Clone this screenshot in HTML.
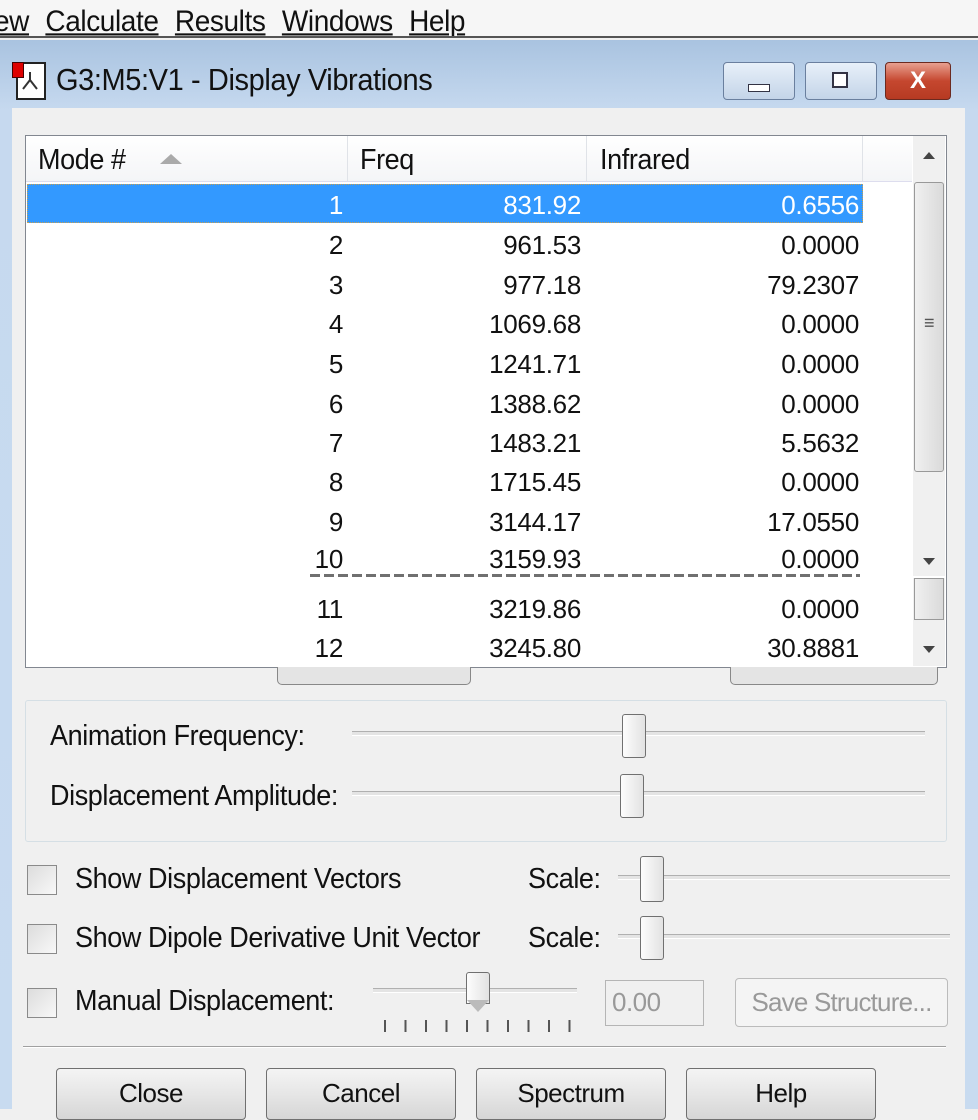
<!DOCTYPE html>
<html><head><style>
body{margin:0;width:978px;height:1109px;overflow:hidden;background:#f0f0f0;font-family:"Liberation Sans",sans-serif;position:relative}
.a{position:absolute}
.t{font-size:27px;color:#111;white-space:nowrap;letter-spacing:-0.4px;transform:scaleY(1.05);transform-origin:0 0}
.row{position:absolute;left:27px;width:836px;height:40px;font-size:26px;letter-spacing:-0.3px;color:#111}
.row span{position:absolute;top:6px;text-align:right}
.c1{right:520px}.c2{right:282px}.c3{right:4px}
.btn{position:absolute;border:1px solid #707070;border-radius:4px;background:linear-gradient(#f4f4f4,#e6e6e6 50%,#d6d6d6);text-align:center;font-size:26px;letter-spacing:-0.5px;color:#111}
.cb{position:absolute;left:27px;width:28px;height:28px;border:1px solid #8a8a8a;background:linear-gradient(135deg,#dcdcdc,#f8f8f8)}
.track{position:absolute;height:3px;border-top:1px solid #b0b0b0;border-bottom:1px solid #fff;background:#e4e4e4}
.thumb{position:absolute;width:22px;border:1px solid #707070;border-radius:3px;background:linear-gradient(90deg,#fdfdfd,#e2e2e2)}
</style></head><body>
<div class="a" style="left:0;top:0;width:978px;height:38px;background:#f6f6f6"></div>
<div class="a t" style="left:-6px;top:5px;font-size:28px;word-spacing:9px"><u>ew</u> <u>Calculate</u> <u>Results</u> <u>Windows</u> <u>Help</u></div>
<div class="a" style="left:0;top:36px;width:978px;height:2px;background:#555"></div>
<div class="a" style="left:0;top:40px;width:978px;height:1069px;background:linear-gradient(#a9c3e0,#c6d9ef 70px,#c8dbf0)"></div>
<div class="a" style="left:16px;top:62px;width:26px;height:34px;background:#fff;border:2px solid #222"></div>
<div class="a" style="left:12px;top:62px;width:10px;height:14px;background:#d00;border:1px solid #400"></div>
<svg class="a" style="left:20px;top:70px" width="20" height="22"><path d="M10 2V10M10 10L3 19M10 10L17 19" stroke="#333" stroke-width="2" fill="none"/></svg>
<div class="a t" style="left:56px;top:64px;font-size:29px">G3:M5:V1 - Display Vibrations</div>
<div class="a" style="left:723px;top:62px;width:70px;height:36px;border:1px solid #6a7f9e;border-radius:4px;background:linear-gradient(#e8f0f9,#c4d4e8)"></div>
<div class="a" style="left:748px;top:84px;width:20px;height:6px;background:#fff;border:1px solid #334"></div>
<div class="a" style="left:805px;top:62px;width:70px;height:36px;border:1px solid #6a7f9e;border-radius:4px;background:linear-gradient(#e8f0f9,#c4d4e8)"></div>
<div class="a" style="left:832px;top:72px;width:12px;height:12px;border:2px solid #334;background:#fff"></div>
<div class="a" style="left:885px;top:62px;width:64px;height:36px;border:1px solid #6b2a20;border-radius:4px;background:linear-gradient(#e8a090,#c5472f 50%,#b63a22);color:#fff;font-weight:bold;font-size:24px;text-align:center;line-height:36px">X</div>
<div class="a" style="left:12px;top:108px;width:953px;height:1001px;background:#f0f0f0"></div>
<div class="a" style="left:25px;top:135px;width:920px;height:531px;border:1px solid #828790;background:#fff"></div>
<div class="a" style="left:26px;top:136px;width:886px;height:45px;background:linear-gradient(#fff,#f4f5f7);border-bottom:1px solid #dde"></div>
<div class="a" style="left:347px;top:136px;width:1px;height:45px;background:#e0e3e8"></div>
<div class="a" style="left:586px;top:136px;width:1px;height:45px;background:#e0e3e8"></div>
<div class="a" style="left:862px;top:136px;width:1px;height:45px;background:#e0e3e8"></div>
<div class="a t" style="left:38px;top:144px">Mode #</div>
<div class="a" style="left:160px;top:154px;width:0;height:0;border-left:11px solid transparent;border-right:11px solid transparent;border-bottom:10px solid #aaa"></div>
<div class="a t" style="left:360px;top:144px">Freq</div>
<div class="a t" style="left:600px;top:144px">Infrared</div>
<div class="a" style="left:27px;top:184px;width:836px;height:39px;background:#3399ff;border:1px dotted #c8a050;box-sizing:border-box"></div>
<div class="row" style="top:184px;color:#fff"><span class="c1">1</span><span class="c2">831.92</span><span class="c3">0.6556</span></div>
<div class="row" style="top:224px"><span class="c1">2</span><span class="c2">961.53</span><span class="c3">0.0000</span></div>
<div class="row" style="top:264px"><span class="c1">3</span><span class="c2">977.18</span><span class="c3">79.2307</span></div>
<div class="row" style="top:303px"><span class="c1">4</span><span class="c2">1069.68</span><span class="c3">0.0000</span></div>
<div class="row" style="top:343px"><span class="c1">5</span><span class="c2">1241.71</span><span class="c3">0.0000</span></div>
<div class="row" style="top:383px"><span class="c1">6</span><span class="c2">1388.62</span><span class="c3">0.0000</span></div>
<div class="row" style="top:422px"><span class="c1">7</span><span class="c2">1483.21</span><span class="c3">5.5632</span></div>
<div class="row" style="top:461px"><span class="c1">8</span><span class="c2">1715.45</span><span class="c3">0.0000</span></div>
<div class="row" style="top:501px"><span class="c1">9</span><span class="c2">3144.17</span><span class="c3">17.0550</span></div>
<div class="row" style="top:538px"><span class="c1">10</span><span class="c2">3159.93</span><span class="c3">0.0000</span></div>
<div class="a" style="left:310px;top:574px;width:550px;height:3px;background:repeating-linear-gradient(90deg,#333 0 10px,transparent 10px 14px);opacity:.7"></div>
<div class="row" style="top:588px"><span class="c1">11</span><span class="c2">3219.86</span><span class="c3">0.0000</span></div>
<div class="row" style="top:627px"><span class="c1">12</span><span class="c2">3245.80</span><span class="c3">30.8881</span></div>
<div class="a" style="left:913px;top:136px;width:32px;height:440px;background:#f0f0f0"></div>
<div class="a" style="left:914px;top:182px;width:30px;height:290px;border:1px solid #999;border-radius:3px;background:linear-gradient(90deg,#f0f0f0,#dadada);box-sizing:border-box"></div>
<div class="a" style="left:923px;top:152px;border-left:6px solid transparent;border-right:6px solid transparent;border-bottom:7px solid #444"></div>
<div class="a" style="left:923px;top:558px;border-left:6px solid transparent;border-right:6px solid transparent;border-top:7px solid #444"></div>
<div class="a t" style="left:924px;top:312px;font-size:18px;color:#555">≡</div>
<div class="a" style="left:913px;top:578px;width:32px;height:88px;background:#f0f0f0"></div>
<div class="a" style="left:914px;top:578px;width:30px;height:42px;border:1px solid #999;background:linear-gradient(90deg,#f0f0f0,#dadada);box-sizing:border-box"></div>
<div class="a" style="left:923px;top:646px;border-left:6px solid transparent;border-right:6px solid transparent;border-top:7px solid #444"></div>
<div class="a" style="left:277px;top:667px;width:192px;height:17px;border:1px solid #888;border-top:none;border-radius:0 0 5px 5px;background:#e4e4e4"></div>
<div class="a" style="left:730px;top:667px;width:206px;height:17px;border:1px solid #888;border-top:none;border-radius:0 0 5px 5px;background:#e4e4e4"></div>
<div class="a" style="left:25px;top:700px;width:920px;height:140px;border:1px solid #d5dfe5;border-radius:3px"></div>
<div class="a t" style="left:50px;top:720px">Animation Frequency:</div>
<div class="track" style="left:352px;top:731px;width:573px"></div>
<div class="thumb" style="left:622px;top:714px;height:42px"></div>
<div class="a t" style="left:50px;top:780px">Displacement Amplitude:</div>
<div class="track" style="left:352px;top:791px;width:573px"></div>
<div class="thumb" style="left:620px;top:774px;height:42px"></div>
<div class="cb" style="top:865px"></div>
<div class="a t" style="left:75px;top:863px">Show Displacement Vectors</div>
<div class="a t" style="left:528px;top:863px">Scale:</div>
<div class="track" style="left:618px;top:875px;width:332px"></div>
<div class="thumb" style="left:640px;top:856px;height:44px"></div>
<div class="cb" style="top:924px"></div>
<div class="a t" style="left:75px;top:922px">Show Dipole Derivative Unit Vector</div>
<div class="a t" style="left:528px;top:922px">Scale:</div>
<div class="track" style="left:618px;top:934px;width:332px"></div>
<div class="thumb" style="left:640px;top:916px;height:42px"></div>
<div class="cb" style="top:988px"></div>
<div class="a t" style="left:75px;top:985px">Manual Displacement:</div>
<div class="track" style="left:373px;top:988px;width:204px"></div>
<div class="thumb" style="left:466px;top:972px;height:30px;border-radius:3px 3px 0 0"></div>
<div class="a" style="left:467px;top:1000px;width:0;height:0;border-left:11px solid transparent;border-right:11px solid transparent;border-top:12px solid #bbb"></div>
<div class="a" style="left:384px;top:1020px;width:190px;height:12px;background:repeating-linear-gradient(90deg,#555 0 2px,transparent 2px 20.5px)"></div>
<div class="a" style="left:605px;top:980px;width:99px;height:46px;border:1px solid #b5b5b5;background:#f0f0f0;color:#999;font-size:26px;box-sizing:border-box;padding:6px 0 0 6px;letter-spacing:-0.5px">0.00</div>
<div class="a" style="left:735px;top:978px;width:213px;height:49px;border:1px solid #bbb;border-radius:4px;background:#f4f4f4;color:#999;font-size:26px;text-align:center;line-height:46px;box-sizing:border-box;letter-spacing:-0.8px;white-space:nowrap">Save Structure...</div>
<div class="a" style="left:23px;top:1046px;width:923px;height:1px;background:#a0a0a0;border-bottom:1px solid #fff"></div>
<div class="btn" style="left:56px;top:1068px;width:188px;height:50px;line-height:48px">Close</div>
<div class="btn" style="left:266px;top:1068px;width:188px;height:50px;line-height:48px">Cancel</div>
<div class="btn" style="left:476px;top:1068px;width:188px;height:50px;line-height:48px">Spectrum</div>
<div class="btn" style="left:686px;top:1068px;width:188px;height:50px;line-height:48px">Help</div>
</body></html>
